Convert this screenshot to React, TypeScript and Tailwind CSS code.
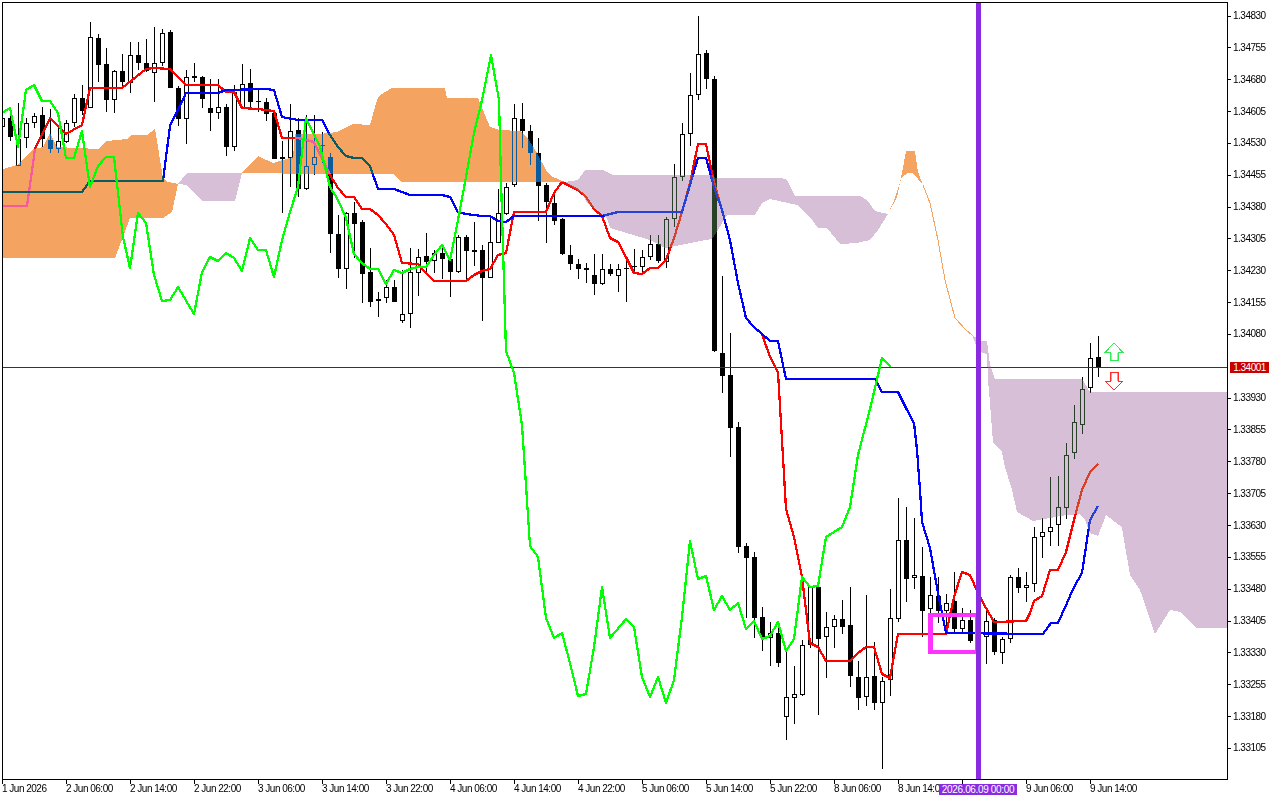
// MT4 style chart: EURUSD-like H1 candles with Ichimoku cloud
type Candle = [number, number, number, number, number];

// high, body top, body bottom, low, 1 = bull (hollow). x = 2 + 8 * index
const candles: Candle[] = [
  [115, 118, 127, 130, 1], [107, 118, 137, 141, 0], [103, 139, 166, 166, 1], [118, 123, 138, 148, 1],
  [113, 116, 123, 128, 1], [107, 115, 139, 147, 0], [109, 140, 149, 153, 0], [127, 141, 149, 153, 1],
  [120, 123, 142, 143, 1], [94, 98, 123, 127, 1], [85, 98, 111, 115, 0], [22, 37, 108, 108, 1],
  [34, 38, 65, 82, 0], [48, 64, 100, 112, 0], [70, 71, 100, 113, 1], [54, 71, 82, 87, 0],
  [42, 55, 83, 93, 1], [42, 55, 63, 70, 0], [39, 63, 71, 72, 0], [27, 63, 73, 102, 1],
  [29, 33, 63, 66, 1], [30, 32, 88, 88, 0], [86, 88, 119, 126, 0], [70, 77, 119, 144, 1],
  [63, 76, 78, 82, 0], [76, 77, 99, 108, 0], [79, 108, 113, 131, 0], [79, 107, 113, 119, 1],
  [104, 107, 147, 156, 0], [85, 92, 147, 151, 1], [64, 84, 108, 108, 1], [69, 83, 102, 108, 0],
  [88, 101, 102, 112, 0], [98, 102, 114, 121, 0], [110, 113, 159, 159, 0], [141, 157, 159, 213, 0],
  [104, 131, 158, 187, 1], [118, 130, 189, 197, 0], [115, 166, 189, 190, 1], [115, 157, 165, 175, 1],
  [132, 145, 146, 163, 0], [153, 157, 234, 253, 0], [215, 234, 269, 278, 0], [212, 213, 269, 289, 1],
  [202, 213, 224, 258, 0], [220, 222, 274, 303, 0], [248, 272, 302, 307, 0], [292, 299, 301, 317, 1],
  [280, 287, 298, 303, 1], [280, 287, 302, 302, 0], [270, 314, 321, 323, 1], [248, 272, 314, 328, 1],
  [249, 257, 273, 296, 1], [233, 256, 262, 273, 0], [250, 253, 261, 273, 1], [244, 253, 259, 279, 0],
  [255, 259, 272, 297, 0], [235, 237, 272, 273, 1], [235, 237, 251, 280, 0], [222, 250, 252, 266, 0],
  [245, 250, 278, 321, 0], [215, 242, 278, 278, 1], [189, 213, 243, 243, 1], [183, 187, 214, 215, 1],
  [104, 118, 185, 187, 1], [103, 119, 131, 148, 0], [125, 131, 153, 165, 0], [138, 153, 186, 221, 0],
  [183, 185, 202, 243, 0], [193, 203, 221, 225, 0], [218, 219, 254, 255, 0], [245, 255, 264, 270, 0],
  [259, 264, 269, 279, 0], [263, 268, 270, 283, 0], [254, 275, 284, 295, 0], [254, 269, 284, 285, 1],
  [264, 269, 274, 276, 0], [264, 269, 276, 292, 1], [258, 268, 269, 302, 0], [249, 266, 267, 273, 0],
  [250, 257, 267, 272, 1], [235, 244, 257, 260, 1], [235, 244, 261, 263, 0], [217, 219, 262, 268, 1],
  [164, 177, 219, 227, 1], [123, 134, 177, 181, 1], [73, 95, 134, 146, 1], [16, 54, 95, 100, 1],
  [50, 53, 79, 89, 0], [76, 79, 351, 352, 0], [276, 353, 376, 393, 0], [333, 375, 428, 457, 0],
  [422, 427, 547, 553, 0], [543, 546, 558, 618, 0], [552, 557, 618, 638, 0], [607, 617, 638, 651, 0],
  [622, 633, 638, 666, 1], [625, 633, 663, 667, 0], [650, 697, 717, 740, 1], [666, 694, 698, 724, 1],
  [640, 645, 695, 696, 1], [587, 587, 645, 648, 1], [586, 587, 639, 715, 0], [612, 627, 637, 678, 1],
  [615, 619, 627, 648, 1], [600, 619, 627, 634, 0], [587, 625, 676, 687, 0], [661, 677, 698, 710, 0],
  [595, 677, 697, 706, 1], [642, 676, 703, 710, 0], [677, 681, 703, 769, 1], [589, 618, 680, 696, 1],
  [498, 540, 619, 622, 1], [507, 540, 579, 602, 0], [518, 575, 578, 589, 1], [547, 576, 611, 637, 0],
  [577, 595, 609, 618, 1], [577, 596, 611, 623, 0], [594, 603, 611, 630, 1], [572, 601, 629, 633, 0],
  [608, 620, 629, 633, 1], [610, 620, 641, 643, 0], [612, 622, 632, 640, 0], [610, 621, 637, 664, 1],
  [618, 620, 652, 655, 0], [637, 639, 653, 664, 1], [575, 577, 639, 643, 1], [568, 577, 588, 593, 0],
  [572, 585, 588, 602, 1], [527, 537, 584, 592, 1], [518, 532, 537, 558, 1], [477, 527, 532, 546, 1],
  [476, 507, 525, 546, 1], [443, 455, 508, 519, 1], [405, 422, 453, 459, 1], [377, 389, 425, 434, 1],
  [343, 358, 388, 393, 1], [336, 357, 367, 377, 0],
];

const redLine =
  '2,206 27,206 35,149 50,118 66,134 82,125 90,88 122,88 146,69 154,68 170,69 186,85 218,85 226,92 234,92 242,108 258,109 274,111 282,138 298,138 314,142 330,175 338,188 346,197 354,197 362,209 370,209 378,215 386,224 394,235 402,263 418,264 426,273 434,281 466,281 474,275 482,271 490,269 498,255 506,253 514,212 546,212 554,193 562,182 570,186 578,190 586,197 594,209 602,216 610,238 618,242 626,257 634,273 642,274 650,268 658,268 666,260 674,238 682,212 690,183 698,144 706,144 714,182 722,210 730,240 738,283 746,318 754,327 762,334 770,357 778,372 782,440 786,509 794,537 802,577 810,643 818,647 826,661 850,661 858,653 866,647 874,647 882,674 890,678 898,634 946,634 954,597 962,572 970,575 978,593 986,608 994,622 1026,621 1030,613 1034,601 1042,596 1050,570 1058,570 1066,552 1074,520 1082,490 1090,472 1098,464';

const blueLine =
  '2,192 82,192 90,181 163,181 170,126 186,93 218,93 226,90 266,89 274,90 282,117 298,120 322,120 330,135 338,147 346,156 354,158 362,158 370,166 378,189 394,189 402,192 410,195 442,195 450,197 458,212 466,214 482,216 490,216 498,221 506,222 514,216 602,216 618,212 682,212 690,185 698,158 706,158 714,187 722,210 730,240 738,283 746,318 754,327 762,334 770,341 778,341 786,379 875,379 882,392 898,392 907,410 914,423 917,450 920,490 922,522 930,548 938,593 946,633 1043,634 1051,623 1058,623 1067,603 1074,587 1082,573 1085,553 1090,520 1098,506';

const greenLine =
  '2,113 10,108 18,147 26,90 34,85 42,101 50,101 58,113 66,158 74,158 82,131 90,187 98,166 106,157 114,157 123,237 130,268 138,213 146,223 154,275 162,301 170,300 178,287 194,314 202,272 210,257 218,261 226,253 234,258 242,271 250,238 258,250 266,250 274,277 282,240 290,212 298,187 306,118 320,147 330,187 338,200 346,218 354,254 362,263 370,269 378,269 386,284 394,270 402,273 410,269 418,267 426,267 434,255 442,245 450,260 458,220 466,177 474,133 482,100 491,55 499,100 501,180 504,282 506,351 514,373 522,425 530,546 538,557 546,618 554,638 562,633 570,663 578,696 586,694 594,647 602,587 610,638 626,619 634,627 642,677 650,697 658,677 666,703 674,680 682,617 690,541 698,579 706,576 714,610 722,596 730,610 738,603 746,629 754,621 762,639 770,636 778,622 786,651 794,639 802,577 810,587 818,586 826,537 842,527 850,507 858,455 870,409 882,358 891,367';

// cloud fills hold the inverse colour, difference blending turns white into sandybrown / thistle
const orangeCloud = [
  '3,169 17,165 33,149 43,147 50,133 57,147 98,149 107,141 127,139 132,135 147,135 155,129 163,178 168,182 178,184 172,212 163,218 130,218 115,258 3,258',
  '242,173 258,156 273,163 293,157 295,134 320,134 337,132 353,124 370,125 377,100 380,95 392,88 445,88 447,98 478,98 483,110 490,127 500,130 520,131 527,137 537,153 547,172 553,177 565,182 402,182 393,174 320,174',
  '888,214 897,197 902,173 906,151 915,151 918,172 923,185 913,173 908,173 902,177 893,203',
];
const thistleCloud = [
  '178,184 187,173 242,173 235,201 202,201 187,185',
  '565,182 578,180 585,170 603,170 613,175 640,175 713,175 715,178 782,178 787,180 795,196 860,196 867,200 875,211 888,214 878,230 870,240 857,243 840,244 827,228 818,228 810,217 797,205 770,199 762,203 755,215 727,215 718,230 712,239 700,241 680,245 665,248 650,240 640,237 610,228 607,218 587,203 582,193',
  '972,335 982,341 987,341 990,365 995,379 1082,379 1090,392 1227,392 1227,628 1197,628 1180,612 1170,610 1155,634 1140,590 1130,575 1124,540 1122,528 1119,525 1106,515 1098,536 1090,533 1085,520 1080,514 1067,515 1033,521 1017,512 1012,490 1005,467 1002,452 993,443 990,403 988,380 987,354 982,353 976,345',
];

const prices = [
  '1.34830', '1.34755', '1.34680', '1.34605', '1.34530', '1.34455', '1.34380', '1.34305',
  '1.34230', '1.34155', '1.34080', '', '1.33930', '1.33855', '1.33780', '1.33705',
  '1.33630', '1.33555', '1.33480', '1.33405', '1.33330', '1.33255', '1.33180', '1.33105',
];

const times = [
  '1 Jun 2026', '2 Jun 06:00', '2 Jun 14:00', '2 Jun 22:00', '3 Jun 06:00', '3 Jun 14:00', '3 Jun 22:00',
  '4 Jun 06:00', '4 Jun 14:00', '4 Jun 22:00', '5 Jun 06:00', '5 Jun 14:00', '5 Jun 22:00', '8 Jun 06:00',
  '8 Jun 14:00', '', '9 Jun 06:00', '9 Jun 14:00',
];

function CandleBar({ candle, index }: { candle: Candle; index: number }) {
  const [high, top, bottom, low, bull] = candle;
  const col = 2 + index * 8;
  return (
    <g>
      <rect x={col} y={high} width={1} height={low - high} fill="#000" />
      <rect x={col - 2} y={top} width={5} height={Math.max(bottom - top, 1)} fill="#000" />
      {bull === 1 && bottom - top > 2 && (
        <rect x={col - 1} y={top + 1} width={3} height={bottom - top - 2} fill="#fff" />
      )}
    </g>
  );
}

function Chart() {
  return (
    <svg viewBox="3 3 1224 776" width={1224} height={776} className="block" shapeRendering="crispEdges">
      <rect x={3} y={3} width={1224} height={776} fill="#fff" />
      {candles.map((c, i) => (
        <CandleBar key={i} candle={c} index={i} />
      ))}
      <rect x={3} y={367} width={1224} height={1} fill="#b00000" />
      <polyline points={redLine} fill="none" stroke="#ff0000" strokeWidth={2.25} strokeLinejoin="round" />
      <polyline points={blueLine} fill="none" stroke="#0000ff" strokeWidth={2.25} strokeLinejoin="round" />

      {orangeCloud.map((p) => (
        <polygon key={p} points={p} fill="#0b5b9f" className="mix-blend-difference" />
      ))}
      {thistleCloud.map((p) => (
        <polygon key={p} points={p} fill="#274027" className="mix-blend-difference" />
      ))}

      <polyline points={greenLine} fill="none" stroke="#00ff00" strokeWidth={2.25} strokeLinejoin="round" />
      <polyline
        points="923,185 930,203 938,240 945,280 955,318 966,330 972,335"
        fill="none"
        stroke="#f4a460"
        strokeWidth={1}
      />

      <rect x={930.5} y={615} width={47} height={37} fill="none" stroke="#ff33ff" strokeWidth={4.5} />
      <rect x={976} y={3} width={5} height={776} fill="#8a2be2" />

      <polygon points="1114,343 1122.5,352 1118,352 1118,360.5 1110,360.5 1110,352 1105.5,352" fill="#fff" stroke="#33e855" strokeWidth={1} />
      <rect x={1111} y={353} width={1} height={7} fill="#b6f060" />
      <rect x={1117} y={353} width={1} height={7} fill="#80f0e0" />
      <polygon points="1110,372 1118,372 1118,381.5 1122.5,381.5 1114,390 1105.5,381.5 1110,381.5" fill="#fff" stroke="#ff2a2a" strokeWidth={1} />
      <rect x={1111} y={373} width={1} height={8} fill="#ff9a7a" />
      <rect x={1117} y={373} width={1} height={8} fill="#ff8ab0" />
    </svg>
  );
}

export default function App() {
  return (
    <div className="relative w-[1280px] h-[800px] bg-white pl-[2px] pt-[2px] overflow-hidden text-black font-['Liberation_Sans',sans-serif] text-[10px] tracking-[-0.5px]">
      <div className="flex">
        <div className="border border-black shrink-0">
          <Chart />
        </div>

        {/* Price axis */}
        <div className="flex flex-col gap-[17.85px] pt-[7px]">
          {prices.map((p, i) => (
            <div key={i} className="flex items-center h-[14px]">
              {p && <span className="w-[3px] h-px bg-black" />}
              {p && <span className="ml-[2px] leading-none">{p}</span>}
            </div>
          ))}
        </div>
      </div>

      {/* Time axis */}
      <div className="flex">
        {times.map((t, i) => (
          <div key={i} className="w-[64px] shrink-0 flex flex-col">
            <span className="w-px h-[4px] bg-black" />
            <span className="leading-none whitespace-nowrap">{t}</span>
          </div>
        ))}
      </div>

      {/* Current price and crosshair date labels */}
      <div className="absolute left-[1230px] top-[362px] w-[39px] h-[11px] bg-[#c80000] text-white leading-[11px] text-center whitespace-nowrap">
        1.34001
      </div>
      <div className="absolute left-[939px] top-[784px] w-[78px] h-[11px] bg-[#8a2be2] text-white leading-[11px] text-center whitespace-nowrap tracking-[-0.35px]">
        2026.06.09 00:00
      </div>
    </div>
  );
}
